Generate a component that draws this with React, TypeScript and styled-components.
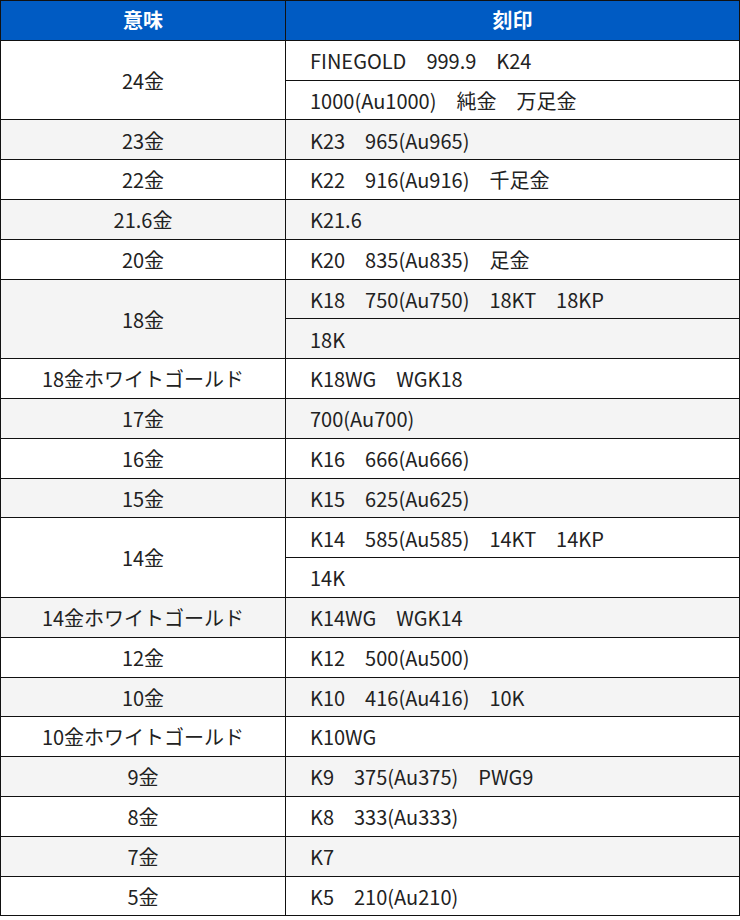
import { FC } from "react";
import styled, { createGlobalStyle } from "styled-components";

const GlobalStyle = createGlobalStyle`
  body {
    margin: 0;
    background: #fff;
    font-family: "Noto Sans CJK JP", "Noto Sans", sans-serif;
    color: #222;
  }
`;

const Table = styled.table`
  width: 740px;
  border-collapse: collapse;
  table-layout: fixed;
  font-size: 20px;
`;

const HeadCell = styled.th<{ w?: number }>`
  width: ${({ w }) => (w ? `${w}px` : "auto")};
  height: 38.8px;
  padding: 0;
  background: #005bc3;
  color: #fff;
  font-weight: 700;
  font-size: 20px;
  border: 1.5px solid #111;
  text-align: center;
  line-height: 1.2;
`;

const MeaningCell = styled.td<{ shaded: boolean }>`
  height: 37.3px;
  padding: 1.5px 4px 0;
  text-align: center;
  background: ${({ shaded }) => (shaded ? "#f4f4f4" : "#fff")};
  border: 1.5px solid #111;
  line-height: 1.2;
`;

const MarkCell = styled.td<{ shaded: boolean }>`
  height: 37.3px;
  padding: 1.5px 24px 0;
  text-align: left;
  background: ${({ shaded }) => (shaded ? "#f4f4f4" : "#fff")};
  border: 1.5px solid #111;
  line-height: 1.2;
  white-space: pre;
`;

interface Entry {
  meaning: string;
  marks: string[];
}

const entries: Entry[] = [
  { meaning: "24金", marks: ["FINEGOLD　999.9　K24", "1000(Au1000)　純金　万足金"] },
  { meaning: "23金", marks: ["K23　965(Au965)"] },
  { meaning: "22金", marks: ["K22　916(Au916)　千足金"] },
  { meaning: "21.6金", marks: ["K21.6"] },
  { meaning: "20金", marks: ["K20　835(Au835)　足金"] },
  { meaning: "18金", marks: ["K18　750(Au750)　18KT　18KP", "18K"] },
  { meaning: "18金ホワイトゴールド", marks: ["K18WG　WGK18"] },
  { meaning: "17金", marks: ["700(Au700)"] },
  { meaning: "16金", marks: ["K16　666(Au666)"] },
  { meaning: "15金", marks: ["K15　625(Au625)"] },
  { meaning: "14金", marks: ["K14　585(Au585)　14KT　14KP", "14K"] },
  { meaning: "14金ホワイトゴールド", marks: ["K14WG　WGK14"] },
  { meaning: "12金", marks: ["K12　500(Au500)"] },
  { meaning: "10金", marks: ["K10　416(Au416)　10K"] },
  { meaning: "10金ホワイトゴールド", marks: ["K10WG"] },
  { meaning: "9金", marks: ["K9　375(Au375)　PWG9"] },
  { meaning: "8金", marks: ["K8　333(Au333)"] },
  { meaning: "7金", marks: ["K7"] },
  { meaning: "5金", marks: ["K5　210(Au210)"] },
];

const App: FC = () => (
  <>
    <GlobalStyle />
    <Table>
      <thead>
        <tr>
          <HeadCell w={284}>意味</HeadCell>
          <HeadCell>刻印</HeadCell>
        </tr>
      </thead>
      <tbody>
        {entries.map((entry, i) => {
          const shaded = i % 2 === 1;
          return entry.marks.map((mark, j) => (
            <tr key={`${i}-${j}`}>
              {j === 0 && (
                <MeaningCell shaded={shaded} rowSpan={entry.marks.length}>
                  {entry.meaning}
                </MeaningCell>
              )}
              <MarkCell shaded={shaded}>{mark}</MarkCell>
            </tr>
          ));
        })}
      </tbody>
    </Table>
  </>
);

export default App;
